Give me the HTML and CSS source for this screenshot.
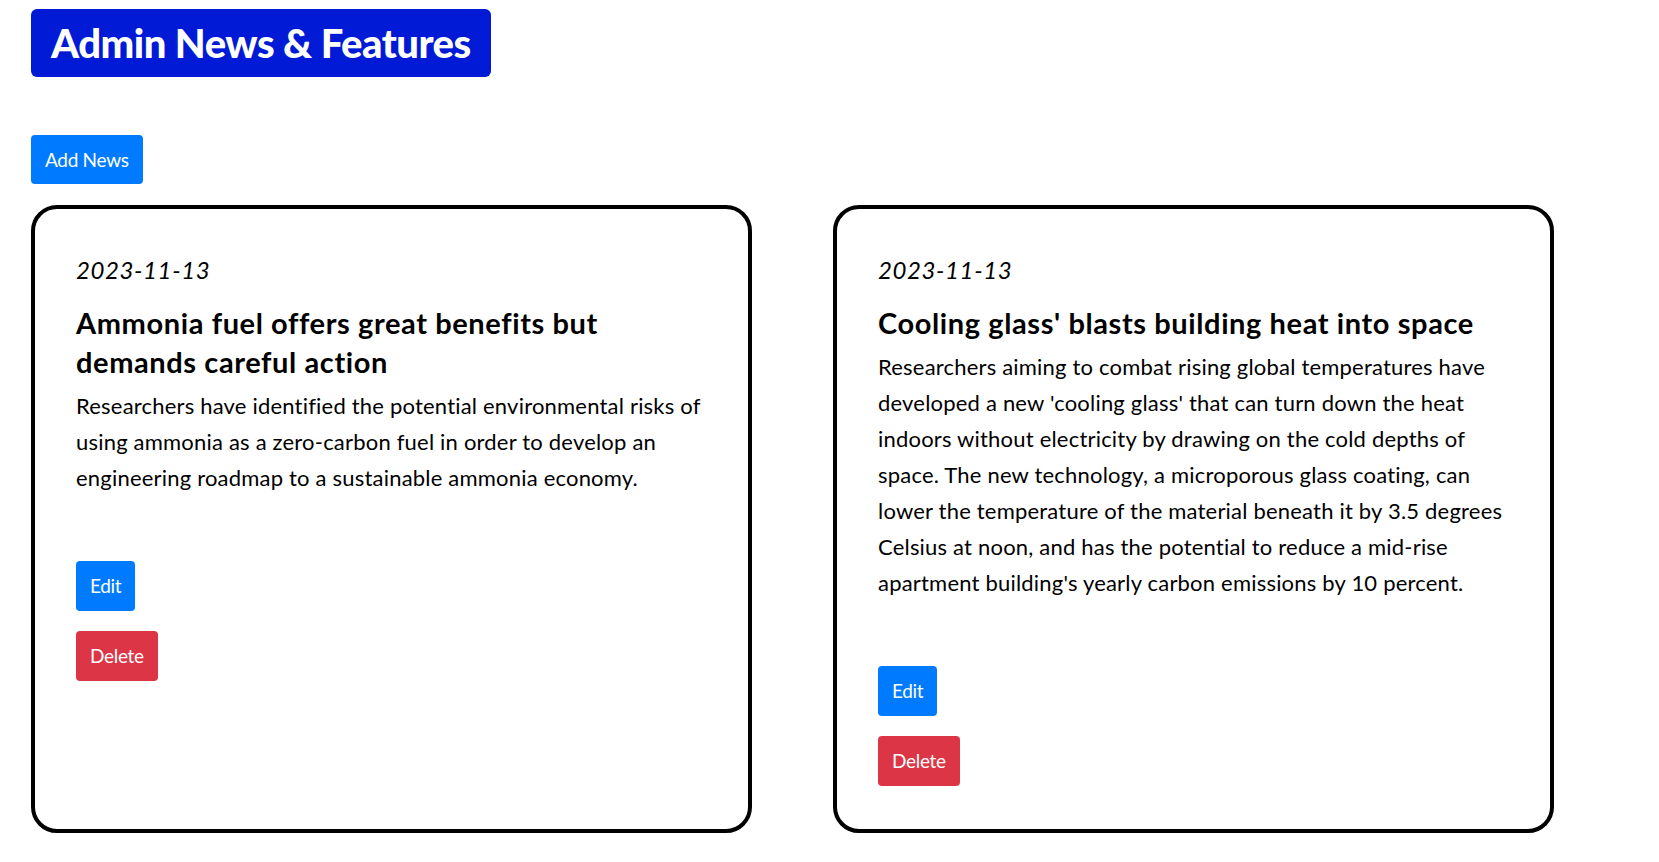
FILE: index.html
```html
<!DOCTYPE html>
<html lang="en">
<head>
<meta charset="utf-8">
<title>Admin News &amp; Features</title>
<link rel="stylesheet" href="styles.css">
</head>
<body>
<div class="page">
  <h1 class="banner">Admin News &amp; Features</h1>
  <div class="toolbar">
    <button class="btn btn-primary">Add News</button>
  </div>
  <div class="news-grid">
    <article class="card">
      <p class="date">2023-11-13</p>
      <h2 class="title">Ammonia fuel offers great benefits but demands careful action</h2>
      <p class="summary">Researchers have identified the potential environmental risks of using ammonia as a zero-carbon fuel in order to develop an engineering roadmap to a sustainable ammonia economy.</p>
      <div class="actions">
        <button class="btn btn-primary">Edit</button>
        <button class="btn btn-danger">Delete</button>
      </div>
    </article>
    <article class="card">
      <p class="date">2023-11-13</p>
      <h2 class="title">Cooling glass' blasts building heat into space</h2>
      <p class="summary">Researchers aiming to combat rising global temperatures have developed a new 'cooling glass' that can turn down the heat indoors without electricity by drawing on the cold depths of space. The new technology, a microporous glass coating, can lower the temperature of the material beneath it by 3.5 degrees Celsius at noon, and has the potential to reduce a mid-rise apartment building's yearly carbon emissions by 10 percent.</p>
      <div class="actions">
        <button class="btn btn-primary">Edit</button>
        <button class="btn btn-danger">Delete</button>
      </div>
    </article>
  </div>
</div>
</body>
</html>
```
FILE: styles.css
```css
* { box-sizing: border-box; }
html, body { margin: 0; padding: 0; background: #fff; }
body {
  font-family: "Lato", "Noto Sans", sans-serif;
  color: #000;
}
.page {
  padding: 9px 31px 20px;
}
.banner {
  display: inline-block;
  margin: 0;
  height: 68px;
  padding: 0 20px;
  background: #001ad5;
  color: #fff;
  border-radius: 6px;
  font-family: "Lato", sans-serif;
  font-weight: 900;
  font-size: 40px;
  line-height: 68px;
  letter-spacing: -0.5px;
}
.toolbar {
  margin-top: 58px;
  margin-bottom: 21px;
}
.btn {
  display: inline-block;
  border: none;
  border-radius: 4px;
  height: 50px;
  padding: 0 14px;
  font-family: "Lato", sans-serif;
  font-size: 19px;
  letter-spacing: -0.3px;
  color: #fff;
  line-height: 50px;
  cursor: pointer;
}
.toolbar .btn { height: 49px; line-height: 49px; }
.btn-primary { background: #007bff; }
.btn-danger { background: #dc3545; }
.news-grid {
  display: grid;
  grid-template-columns: 721px 721px;
  column-gap: 81px;
  align-items: stretch;
}
.card {
  border: 4.5px solid #000;
  border-radius: 26px;
  padding: 40px 39px 43px 41px;
  display: flex;
  flex-direction: column;
  align-items: flex-start;
}
.date {
  margin: 3px 0 15px;
  font-style: italic;
  font-size: 24px;
  letter-spacing: 0.6px;
  line-height: 36px;
}
.title {
  margin: 0 0 7px;
  font-size: 29px;
  font-weight: 700;
  letter-spacing: 0.6px;
  line-height: 39px;
}
.summary {
  margin: 0 0 65px;
  font-size: 22px;
  letter-spacing: 0.2px;
  line-height: 36px;
}
.actions {
  display: flex;
  flex-direction: column;
  align-items: flex-start;
  gap: 20px;
}
```
